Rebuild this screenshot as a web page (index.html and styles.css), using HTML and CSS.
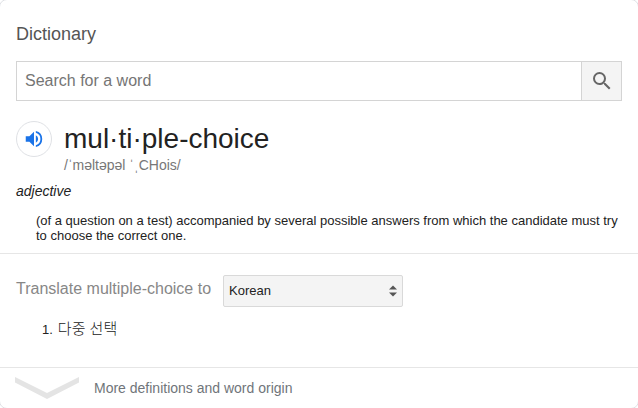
FILE: index.html
```html
<!DOCTYPE html>
<html lang="en">
<head>
<meta charset="utf-8">
<title>Dictionary</title>
<link rel="stylesheet" href="styles.css">
</head>
<body>
<main class="card">
  <h1 class="title">Dictionary</h1>
  <form class="search">
    <input class="search-input" type="text" placeholder="Search for a word">
    <button class="search-button" type="button">
      <svg width="24" height="24" viewBox="0 0 24 24" fill="#666"><path d="M15.5 14h-.79l-.28-.27A6.47 6.47 0 0 0 16 9.5 6.5 6.5 0 1 0 9.5 16c1.61 0 3.09-.59 4.23-1.57l.27.28v.79l5 4.99L20.49 19l-4.99-5zm-6 0a4.5 4.5 0 1 1 0-9 4.5 4.5 0 0 1 0 9z"/></svg>
    </button>
  </form>
  <section class="entry">
    <div class="headword">
      <button class="speaker" type="button">
        <svg width="24" height="24" viewBox="0 0 24 24" fill="#1a73e8"><path d="M3 9v6h4l5 5V4L7 9H3zm13.5 3A4.5 4.5 0 0 0 14 7.97v8.05A4.48 4.48 0 0 0 16.500 12zM14 3.230v2.060a7 7 0 0 1 0 13.420v2.060a9 9 0 0 0 0-17.540z"/></svg>
      </button>
      <div>
        <div class="word">mul·ti·ple-choice</div>
        <div class="phonetic">/ˈməltəpəl ˈˌCHois/</div>
      </div>
    </div>
    <div class="pos">adjective</div>
    <p class="definition">(of a question on a test) accompanied by several possible answers from which the candidate must try<br>to choose the correct one.</p>
  </section>
  <section class="translate">
    <div class="translate-row">
      <span class="translate-label">Translate multiple-choice to</span>
      <div class="select">
        <span class="select-value">Korean</span>
        <svg width="8" height="12" viewBox="0 0 8 12" fill="#555"><path d="M0 4.500 4 .5l4 4zM0 7.500l4 4 4-4z"/></svg>
      </div>
    </div>
    <div class="result"><span class="num">1.</span><span class="meaning" lang="ko">다중 선택</span></div>
  </section>
  <footer class="more">
    <svg width="64" height="24" viewBox="0 0 64 24" fill="#e4e4e4"><path d="M0 1 32 17 64 1v5.500L32 23 0 6.500z"/></svg>
    <span>More definitions and word origin</span>
  </footer>
</main>
</body>
</html>
```
FILE: styles.css
```css
* { box-sizing: border-box; }
body {
  margin: 0;
  overflow: hidden;
  background: #fff;
  font-family: "Liberation Sans", Arial, "Noto Sans CJK KR", sans-serif;
  color: #222;
}
.card {
  width: 640px;
  height: 410px;
  margin: -1px;
  border: 1px solid #dfe1e5;
  border-radius: 8px;
}
.title {
  margin: 0;
  padding: 24px 16px 0;
  height: 61px;
  font-size: 18px;
  font-weight: 400;
  line-height: 20px;
  color: #555;
}
.search { display: flex; height: 40px; margin: 0 16px; }
.search-input {
  flex: 1;
  min-width: 0;
  padding: 0 8px;
  border: 1px solid #d4d4d4;
  border-right: 0;
  font: 16px "Liberation Sans", Arial, sans-serif;
}
.search-input::placeholder { color: #757575; opacity: 1; }
.search-button {
  display: flex;
  align-items: center;
  justify-content: center;
  width: 41px;
  padding: 0;
  border: 1px solid #d4d4d4;
  background: #f4f4f4;
}
.entry { height: 153px; padding: 20px 16px 0; border-bottom: 1px solid #e6e6e6; }
.headword { display: flex; gap: 12px; height: 61px; }
.speaker {
  display: flex;
  align-items: center;
  justify-content: center;
  width: 36px;
  height: 36px;
  padding: 0;
  border: 1px solid #dfe1e5;
  border-radius: 50%;
  background: #fff;
}
.speaker svg { width: 22px; height: 22px; }
.word { font-size: 28px; line-height: 36px; }
.phonetic { font-size: 14px; line-height: 16px; color: #777; }
.pos { font-size: 14px; line-height: 18px; font-style: italic; }
.definition { margin: 13px 0 0 20px; font-size: 13px; line-height: 15px; white-space: nowrap; }
.translate { height: 114px; padding: 21px 16px 0; border-bottom: 1px solid #e6e6e6; }
.translate-row { display: flex; gap: 12px; height: 32px; }
.translate-label { width: 195px; font-size: 16px; line-height: 27px; color: #878787; white-space: nowrap; }
.select {
  display: flex;
  align-items: center;
  justify-content: space-between;
  width: 180px;
  padding: 0 5px;
  border: 1px solid #d9d9d9;
  border-radius: 2px;
  background: #f4f4f4;
  font-size: 13px;
}
.select-value { padding-bottom: 2px; }
.result { display: flex; gap: 5px; margin: 12px 0 0 26px; line-height: 20px; }
.num { padding-top: 1px; font-size: 13px; }
.meaning { font-size: 15px; font-weight: 300; }
.more { display: flex; gap: 15px; padding: 8px 15px 0; font-size: 14px; line-height: 25px; color: #70757a; }
```
